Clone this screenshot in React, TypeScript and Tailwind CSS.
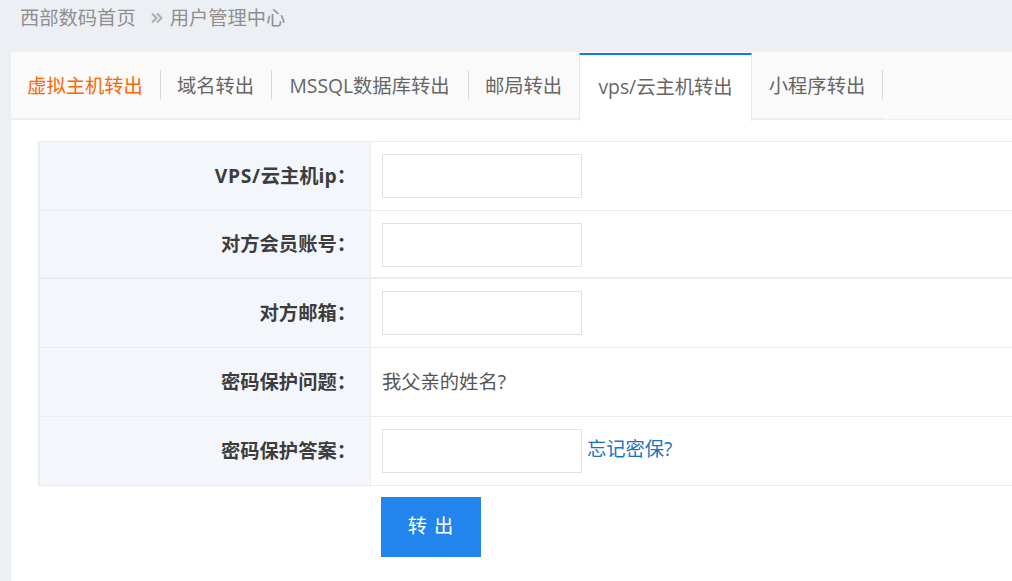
import React from 'react'

const font = { fontFamily: '"Open Sans", "Noto Sans CJK SC", sans-serif' }

const tabs = [
  { label: '虚拟主机转出', width: 'w-[150px]', text: 'text-[#ff6600]', divider: true },
  { label: '域名转出', width: 'w-[111px]', text: 'text-[#666666]', divider: true },
  { label: 'MSSQL数据库转出', width: 'w-[197px]', text: 'text-[#666666]', divider: true },
  { label: '邮局转出', width: 'w-[110px]', text: 'text-[#666666]', divider: false },
]

function Field() {
  return <input className="h-[44px] w-[200px] border border-[#dfe1e4] bg-white outline-none" />
}

function Row({ label, short, children }: { label: React.ReactNode; short?: boolean; children: React.ReactNode }) {
  return (
    <div className={`flex border-[#eaecef] ${short ? 'h-[68px] border-b-2' : 'h-[69px] border-b'}`}>
      <div className="flex w-[331px] shrink-0 items-center justify-end border-r border-[#eaecef] bg-[#f3f7fc] pt-px pr-[14px] text-[19.3px] font-bold text-[#3d3d3d]">
        <span>{label}</span>
      </div>
      <div className={`flex flex-1 items-center pl-[11px] text-[19.3px] text-[#555555] ${short ? 'pt-[2px]' : ''}`}>{children}</div>
    </div>
  )
}

export default function App() {
  return (
    <div className="h-[581px] w-[1012px] overflow-hidden bg-[#eceff4]" style={font}>
      <div className="flex h-[52px] items-start pl-[20px] text-[19.3px] leading-[35px] text-[#8f8f8f]">
        <span>西部数码首页</span>
        <svg className="ml-[15px] mr-[7px] mt-[12px] h-[12px] w-[12px]" viewBox="0 0 12 12" fill="none" stroke="#b0b0b0" strokeWidth="2.2">
          <path d="M1 1.5 5.5 6 1 10.5" />
          <path d="M6 1.5 10.5 6 6 10.5" />
        </svg>
        <span>用户管理中心</span>
      </div>

      <div className="ml-[11px] h-[529px] bg-white">
        <div className="flex h-[68px] border-b border-[#eeeeee] bg-[#fafafa]">
          {tabs.map((tab) => (
            <div key={tab.label} className={`flex h-[68px] items-center border-b-2 border-[#eeeeee] ${tab.width}`}>
              <span className={`flex-1 pt-[2px] pr-px text-center text-[19.3px] whitespace-nowrap ${tab.text}`}>{tab.label}</span>
              {tab.divider && <span className="h-[30px] w-px bg-[#d9d9d9]" />}
            </div>
          ))}
          <div className="mt-px flex h-[68px] w-[173px] items-center justify-center border-x border-t-2 border-x-[#e8e8e8] border-t-[#0f7fdc] bg-white pb-[2px] text-[19.3px] text-[#666666]">
            vps/云主机转出
          </div>
          <div className="flex h-[68px] w-[131px] items-center border-b-2 border-[#eeeeee]">
            <span className="flex-1 pt-[2px] text-center text-[19.3px] text-[#666666]">小程序转出</span>
            <span className="h-[30px] w-px bg-[#d9d9d9]" />
          </div>
        </div>

        <div className="ml-[27px] mt-[21px] border-l-2 border-t border-[#eaecef]">
          <Row
            label={
              <>
                <span className="tracking-[0.7px]">VPS/</span>云主机ip：
              </>
            }
          >
            <Field />
          </Row>
          <Row label="对方会员账号：" short>
            <Field />
          </Row>
          <Row label="对方邮箱：">
            <Field />
          </Row>
          <Row label="密码保护问题：">我父亲的姓名?</Row>
          <Row label="密码保护答案：">
            <Field />
            <a className="ml-[5px] pb-[3px] text-[#1a73c8]">忘记密保?</a>
          </Row>
        </div>

        <button className="ml-[370px] mt-[11px] block h-[60px] w-[100px] bg-[#2185ed] pb-[2px] text-[19.3px] tracking-[1px] text-white">
          转 出
        </button>
      </div>
    </div>
  )
}
